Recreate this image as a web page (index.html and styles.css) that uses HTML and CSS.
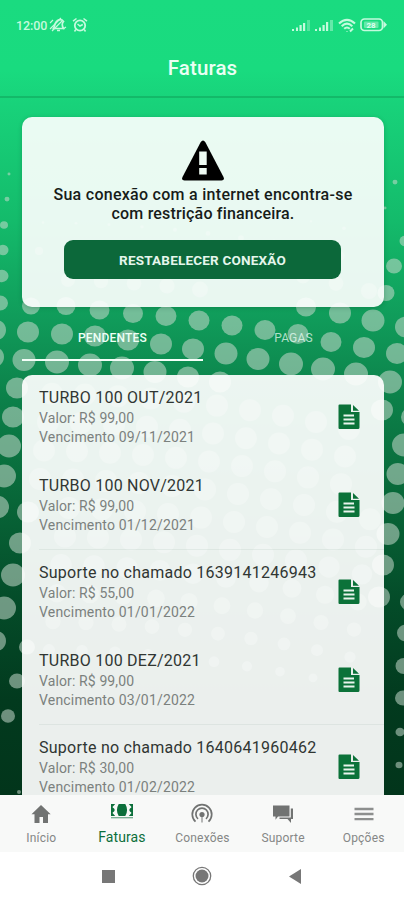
FILE: index.html
```
<!DOCTYPE html>
<html lang="pt-BR">
<head>
<meta charset="utf-8">
<title>Faturas</title>
<link rel="stylesheet" href="styles.css">
</head>
<body>
<div class="app">
  <svg class="dots" id="dots" width="404" height="795" aria-hidden="true"></svg>
  <header class="header">
    <div class="status">
      <span class="clock">12:00</span>
      <svg class="mute" width="18" height="16" viewBox="0 0 18 16"><path d="M4.500 11.500C6 9.500 5 6 8.500 3.500Q12 1.500 14.500 4.500Q12 7 14.500 11.500H4.500ZM8 13.500h3" fill="none" stroke="currentColor" stroke-width="1.700"/><path d="M1 12L12 1M3 14L14 3M1 6l3-3M14 12l3-2" stroke="currentColor" stroke-width="1.200"/></svg>
      <svg class="alarm" width="16" height="16" viewBox="0 0 16 16" fill="none" stroke="currentColor"><circle cx="8" cy="8.500" r="5.200" stroke-width="1.800"/><path d="M1 4.200L4.500 1.500M15 4.200L11.500 1.500M3.800 12.500L2.500 14.500M12.200 12.500l1.300 2M5.500 7l2.500 2 2.800-1.500" stroke-width="1.500"/></svg>
      <span class="spacer"></span>
      <svg class="signal" width="19" height="12" viewBox="0 0 19 12" fill="currentColor"><path d="M0 10h2v2H0zM4 8.500h2V12H4zM7.500 6h2.200v6H7.500zM11 4h2.200v8H11z"/><path d="M15 1h3v11h-3z" opacity=".35"/></svg>
      <svg class="signal" width="19" height="12" viewBox="0 0 19 12" fill="currentColor"><path d="M0 10h2v2H0zM4 8.500h2V12H4zM7.500 6h2.200v6H7.500zM11 3h2.200v9H11z"/><path d="M15 1h3v11h-3z" opacity=".45"/></svg>
      <svg class="wifi" width="18" height="15" viewBox="0 0 18 15" fill="none" stroke="currentColor" stroke-width="2.100"><path d="M1 5.500Q9-1.800 17 5.500M3.700 8.200Q9 3.200 14.300 8.200M6.200 10.800Q9 8.200 11.800 10.800"/><path d="M12 13.500l3-3M9 13.200v.5" stroke-width="2"/></svg>
      <svg class="battery" width="27" height="14" viewBox="0 0 27 14"><rect x="1" y="1" width="21.500" height="11.500" rx="3.500" fill="none" stroke="currentColor" stroke-width="1.700"/><path d="M23.500 3L27 6.700 23.500 10.500z" fill="currentColor"/><rect x="4" y="3.500" width="14.500" height="6.500" rx="1" fill="currentColor" opacity=".45"/><text x="6.500" y="10" class="level">28</text></svg>
    </div>
    <h1 class="title">Faturas</h1>
  </header>
  <main class="content">
    <section class="alert">
      <svg class="warn" width="44" height="41" viewBox="0 0 44 41"><path d="M19.500 2.500Q22-1.500 24.500 2.500L42.500 37Q44 40.500 40.500 40.500H3.500Q0 40.500 1.500 37Z" fill="#000"/><path d="M18.200 11.500h7.500V25h-7.500zM18.200 28h7.500v6.500h-7.500z" fill="#eefbf3"/></svg>
      <p class="message">Sua conexão com a internet encontra-se<br><span class="second">com restrição financeira.</span></p>
      <button class="restore">RESTABELECER CONEXÃO</button>
    </section>
    <nav class="tabs">
      <div class="tab active">PENDENTES</div>
      <div class="tab">PAGAS</div>
    </nav>
    <section class="invoices">
      <article class="invoice noline"><div><h2 class="up">TURBO 100 OUT/2021</h2><p>Valor: R$ 99,00</p><p class="due">Vencimento 09/11/2021</p></div><svg class="doc" width="22" height="26" viewBox="0 0 22 26"><use href="#doc"/></svg></article>
      <article class="invoice"><div><h2 class="up">TURBO 100 NOV/2021</h2><p>Valor: R$ 99,00</p><p class="due">Vencimento 01/12/2021</p></div><svg class="doc" width="22" height="26" viewBox="0 0 22 26"><use href="#doc"/></svg></article>
      <article class="invoice noline"><div><h2>Suporte no chamado 1639141246943</h2><p>Valor: R$ 55,00</p><p class="due">Vencimento 01/01/2022</p></div><svg class="doc" width="22" height="26" viewBox="0 0 22 26"><use href="#doc"/></svg></article>
      <article class="invoice"><div><h2 class="up">TURBO 100 DEZ/2021</h2><p>Valor: R$ 99,00</p><p class="due">Vencimento 03/01/2022</p></div><svg class="doc" width="22" height="26" viewBox="0 0 22 26"><use href="#doc"/></svg></article>
      <article class="invoice noline"><div><h2>Suporte no chamado 1640641960462</h2><p>Valor: R$ 30,00</p><p class="due">Vencimento 01/02/2022</p></div><svg class="doc" width="22" height="26" viewBox="0 0 22 26"><use href="#doc"/></svg></article>
    </section>
  </main>
  <nav class="bottom">
    <a class="item"><svg width="22" height="22" viewBox="0 0 22 22"><path d="M11 2L1.500 11.300h3V20h5v-6h3.500v6h5v-8.700h2.700z" fill="currentColor"/></svg><span>Início</span></a>
    <a class="item on"><svg width="22" height="22" viewBox="0 0 22 22"><path d="M0 3h22v12H0z" fill="currentColor"/><path d="M4.200 3L1.500 6V12l2.700 3h3.500Q4.200 9 7.700 3zM17.800 3L20.500 6v6l-2.700 3h-3.500Q17.800 9 14.300 3z" fill="#f8f9f8"/><path d="M1 6Q6.500 9 1 12zM21 6Q15.500 9 21 12z" fill="currentColor"/><path d="M0 16.700h22" stroke="currentColor" stroke-width="1.300" opacity=".55"/></svg><span>Faturas</span></a>
    <a class="item"><svg width="22" height="22" viewBox="0 0 22 22" fill="none" stroke="currentColor"><path d="M4.500 18.600A9.700 9.700 0 1 1 17.500 18.600M7 15.800A6.100 6.100 0 1 1 15 15.800" stroke-width="1.700"/><circle cx="11" cy="11.500" r="2.600" fill="currentColor" stroke="none"/><path d="M11 13v6.500" stroke-width="1"/></svg><span>Conexões</span></a>
    <a class="item"><svg width="22" height="22" viewBox="0 0 22 22" fill="currentColor"><path d="M1 2.500h16.500v11H6L3.500 16.800V13.500H1z"/><path d="M18.800 5.500H21V16h-2v4l-3.500-4H7.500v-1.500h11.300z"/></svg><span>Suporte</span></a>
    <a class="item menu"><svg width="22" height="22" viewBox="0 0 22 22" stroke="currentColor" stroke-width="2.300"><path d="M1.500 6h19M1.500 11h19M1.500 16.200h19"/></svg><span>Opções</span></a>
  </nav>
  <footer class="system">
    <svg width="13" height="13"><path d="M0 0h13v13H0z" fill="#777"/></svg>
    <svg width="20" height="20" viewBox="0 0 20 20"><circle cx="10" cy="10" r="8.700" fill="none" stroke="#777" stroke-width="1.300"/><circle cx="10" cy="10" r="6.500" fill="#777"/></svg>
    <svg width="12" height="15"><path d="M12 0v15L0 7.500z" fill="#777"/></svg>
  </footer>
</div>
<svg class="defs" width="0" height="0"><defs><g id="doc"><path d="M1.500.5H13V8h8.500v15.500q0 1.500-1.500 1.500H1.500Q.5 25 .5 24V1.500Q.5.5 1.500.5z" fill="#0b7239"/><path d="M15 1l6 5.800h-6z" fill="#0b7239"/><path d="M5.500 11.500h10.500M5.500 15.500h11M5.500 19.500h11" stroke="#e9f4ed" stroke-width="2"/></g></defs></svg>
<script src="dots.js"></script>
</body>
</html>
```
FILE: styles.css
```
* { box-sizing: border-box; margin: 0; padding: 0; }
body { font-family: Roboto, "Liberation Sans", sans-serif; background: #fff; overflow: hidden; }
.defs { position: absolute; }
.app {
  position: relative;
  width: 404px;
  height: 900px;
  overflow: hidden;
  display: flex;
  flex-direction: column;
  background: linear-gradient(#1adb80 0, #19db7f 70px, #18d27a 105px, #14bb6b 220px, #109b5a 320px, #0c8049 400px, #086638 500px, #044c29 600px, #023a1e 700px, #02351b 795px);
}
.dots { position: absolute; left: 0; top: 0; fill: #c6d8cc; fill-opacity: .55; }
.dots .under { fill-opacity: .34; }
.header { position: relative; height: 98px; border-bottom: 2px solid #13b969; flex: none; }
.status { display: flex; align-items: center; height: 18px; margin-top: 16px; padding: 0 17px 0 16px; color: #c4fadd; }
.clock { font-size: 12.500px; font-weight: 500; letter-spacing: -.1px; width: 33px; white-space: nowrap; }
.alarm { margin-left: 5px; }
.spacer { flex: 1; }
.signal { margin-right: 4px; }
.signal + .wifi { margin-right: 4px; }
.level { font: 700 8px Roboto, sans-serif; fill: #dffff0; }
.title { font-size: 20.500px; line-height: 26px; font-weight: 500; color: #eafff4; text-align: center; margin-top: 21px; padding-left: 1px; letter-spacing: .1px; }
.content { position: relative; height: 697px; flex: none; overflow: hidden; padding: 19px 20px 0 22px; display: flex; flex-direction: column; }
.alert { height: 190px; flex: none; border-radius: 10px; background: rgba(255,255,255,.91); display: flex; flex-direction: column; align-items: center; padding-top: 23px; box-shadow: 0 1px 4px rgba(0,60,30,.25); }
.message { font-size: 16px; font-weight: 500; line-height: 19px; color: #171c19; text-align: center; margin-top: 4px; letter-spacing: .28px; white-space: nowrap; }
.second { letter-spacing: .18px; }
.restore { width: 277px; height: 39px; margin-top: 17px; margin-right: 1px; border: 0; border-radius: 9px; background: #0c683a; color: #e5f6ec; font: 700 13.500px Roboto, sans-serif; letter-spacing: .2px; }
.tabs { display: flex; height: 54px; flex: none; width: 362px; }
.tab { flex: 1; text-align: center; font-size: 12px; line-height: 14px; padding-top: 24px; color: rgba(240,255,247,.72); letter-spacing: .2px; }
.tab.active { color: #eefff6; font-weight: 500; border-bottom: 2px solid #f4fff9; }
.invoices { flex: none; margin-top: 14px; height: 450px; border-radius: 10px; background: rgba(255,255,255,.92); padding-left: 17px; }
.invoice { height: 87.600px; padding: 12px 24px 0 0; display: flex; justify-content: space-between; border-bottom: 1px solid rgba(0,60,30,.06); }
.invoice.noline { border-color: transparent; }
.invoice h2 { font-size: 16px; line-height: 21px; font-weight: 400; color: #303633; letter-spacing: .25px; white-space: nowrap; }
.invoice h2.up { letter-spacing: .24px; }
.invoice p { font-size: 14px; line-height: 19px; color: #7b817e; letter-spacing: .12px; position: relative; top: 1px; }
.invoice .due { letter-spacing: .18px; }
.doc { margin-top: 17px; flex: none; }
.bottom { position: relative; height: 57px; flex: none; display: flex; background: #f8f9f8; color: #717372; padding-left: 1px; }
.item { width: 20%; display: flex; flex-direction: column; align-items: center; padding-top: 8px; font-size: 12px; line-height: 16px; letter-spacing: .2px; }
.item span { margin-top: 5px; color: #858786; }
.item.on { color: #0c6f3b; font-size: 14px; padding-top: 6px; }
.item.on span { margin-top: 6px; color: #0c6f3b; letter-spacing: .1px; }
.menu svg { color: #8d8f8e; }
.system { position: relative; height: 48px; background: #fff; display: flex; align-items: center; padding-left: 102px; }
.system svg:nth-child(2) { margin-left: 77px; }
.system svg:nth-child(3) { margin-left: 77px; }
```
FILE: dots.js
```
// Halftone backdrop: [x, y, radius] for the dots outside the cards.
const open = [
  [9,174,1.5],[7,199,2.5],[4,225,4],[3,250,5.5],[2,276,6.5],[0,303,8],
  [395,182,2.5],[385,208,1.5],[405,241,5.5],[394,266,8],[386,293,8.5],
  [31,306,9],[66,306,9.5],[99.5,310,10],[133,313.5,10],[166,316,10.5],[199,320.5,10.5],[232,325.5,10.5],[265,330,10.5],[298,334,10.5],[331,342,10.5],[364,347.5,11],[397,353.5,11],
  [306,307,10],[340,313,11],[373,320.5,11.5],[406,327,11],
  [-5,330,11],[28,332,11],[62,334,11],[95,336,11],[128,340,11],[161,344,11],[193,349,11],[226,353.5,11.500],[258,359,11.500],[291,364,12],[323,369,12],[356,374,12],[390,382,12],
  [-7,357,11],[24,360,11.5],[57,362,12],[90,365,12],[122,368,12],[155,372,11.5],[188,377,11],[220,382,11],
  [17,388,11],[13,417,11],[9,446,12],[4,476,12],[-3,507,12],[28,512,11],[20,543,11],[13,575,12],[4,608,12],[-5,641,11],[27,647,8],[17,681,8],[8,716,7],[19,792,2],
  [382,410,11],[411,417,10],[404,445,12],[398,474,11.5],[393,503,11.500],[388,534,11.500],[383,565,11],[379,597,11],[409,602,9],[406,633,9],[404,666,8.5],[403,698,8],[400,732,4.5],[399,765,3.5]
];
const parts = open.map(([x, y, r]) => `<ellipse cx="${x}" cy="${y}" rx="${r}" ry="${r * 0.95}"/>`);

// Lattice continuing beneath the translucent cards.
for (let j = -4; j < 13; j++) {
  if (j > -1 && j < 3) continue;
  for (let i = -1; i < 13; i++) {
    const x = 31 + 33 * i - 4 * j;
    const y = 308 + 0.00035 * (x - 31) ** 2 + 28.5 * j;
    const r = y < 300 ? Math.max(1, 9 - (300 - y) / 10) : y > 560 ? Math.max(1.5, 11 - (y - 560) / 18) : 11;
    const covered = (y < 292 && y > 220) || y > 390;
    if (x > 37 && x < 371 && covered && y < 770) parts.push(`<circle class="under" cx="${x}" cy="${y}" r="${r}"/>`);
  }
}
document.getElementById("dots").innerHTML = parts.join("");
```
